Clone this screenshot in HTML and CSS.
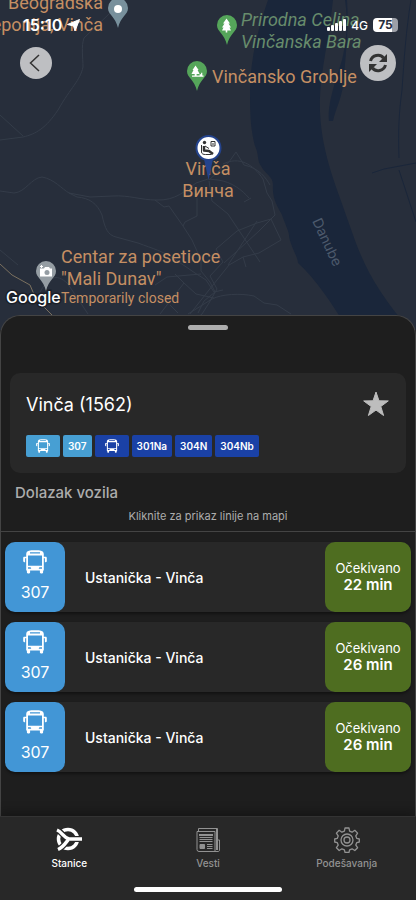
FILE: index.html
```
<!DOCTYPE html>
<html lang="sr-Latn">
<head>
    <meta charset="UTF-8">
    <meta name="viewport" content="width=device-width, initial-scale=1.0">
    <title>Vinča (1562) - Dolazak vozila</title>
    <link rel="stylesheet" href="styles.css">
</head>
<body>
    <!-- Shared icons -->
    <svg class="sprite" width="0" height="0" aria-hidden="true">
        <symbol id="bus" viewBox="0 0 24 24">
            <path fill="currentColor" fill-rule="evenodd" d="M6 .8C8 .2 16 .2 18 .8c1.8.5 2.6 1.4 2.8 3.2v2.800h1.700c.8 0 1.300.5 1.300 1.300v3c0 .8-.5 1.200-1.300 1.200h-.6V8.300h-1.100V20.500h-.7v1.700c0 .8-.4 1.200-1.100 1.200h-1c-.7 0-1.100-.4-1.100-1.200v-1.700H7.100v1.700c0 .8-.4 1.200-1.100 1.200H5c-.7 0-1.100-.4-1.100-1.200v-1.700h-.7V8.300H2.100v4h-.6c-.8 0-1.300-.4-1.300-1.200v-3c0-.8.5-1.300 1.300-1.300h1.700V4C3.400 2.200 4.200 1.300 6 .8zM7 2.200v1.300h10V2.200zM5 5.500v10.300h14V5.500zM5 17.300v1.500h3.300l-.7-1.500zM19 17.300h-2.600l-.7 1.500H19z"/>
        </symbol>
        <symbol id="pin" viewBox="0 0 20 30">
            <path d="M10 0A10 10 0 0 0 0 10c0 7 7.500 8.500 10 20 2.500-11.500 10-13 10-20A10 10 0 0 0 10 0z"/>
        </symbol>
    </svg>

    <div class="app">
        <header class="map">
            <svg class="map-canvas" viewBox="0 0 416 330" preserveAspectRatio="xMidYMid slice">
                <rect width="416" height="330" fill="#272e3b"/>

                <!-- Danube -->
                <path class="water" d="M268 0C258 28 250 60 250 92c0 26 1 38 5 54 4 8 2 15 6 20 4 8 12 10 12 19-1 14 4 20 9 30 3 9 6 14 7 20 0 8 9 22 9 28 18 16 35 42 50 67h62C380 295 365 270 352 232c-14-42-30-75-32-120-1-35 7-60 13-112z"/>
                <path class="water" d="M345 0c3 20 2 38-3 60-6 20-15 44-13 61h4c3-14 10-24 11-44 2-26 5-50 3-77z"/>
                <path class="canal" d="M411 0c-5 30-7 60-9 90-3 22-4 40-3 68M372 173l12-4 32-6M399 170l17 52"/>

                <!-- Roads -->
                <g class="road">
                    <path d="M110 13L84 38c-3 8-1 20-1 29-3 14-12 20-25 43-12 18-22 24-35 27L0 140M0 115l23 21"/>
                    <path d="M0 191l14 2c12-1 17-15 28-16 12 2 20 12 27 16l21 4 23-1c16-1 28 4 43 4 20 1 30-10 40-17l12-4 10 1c14 2 24 10 31 18"/>
                    <path d="M69 193l8 4c12 1 20 6 25 18 3 14 6 20 14 22l22 6c16 6 24 8 35 15l22 15 11 7 8 12 9-2"/>
                    <path d="M155 200l9 7 5-1 14 20 9 14 9 20v11l9 11 5 10-11 9-6 12M183 226l2-4 12-6V198"/>
                    <path d="M209 181l3 20 16 13 12 18 20 30M209 180l20-18 7-10 8 13c15 3 22 13 26 20M223 164c16-8 30 0 40 15l4 14 5 8 3 14-4 4-14 4-20 8-21 18 7 13-13 14 7 13-8 14-7 11-16 13"/>
                    <path d="M271 219l-12 12-35 32M257 221l-29 44M271 219l10 21-22 13-16 4-14 8-20 25-19 24M244 202l7-4M243 257l3 10"/>
                    <path d="M155 285l12-8 34-3M160 314l24-31-9-9M188 314l24-15c10-5 28-6 42-3l10 7 13 2 14 9M184 283l12 11 18 4M170 305l8 8"/>
                    <path d="M40 292c8-14 16-20 28-8l20 30M0 250l18 15"/>
                </g>
                <path class="highway" d="M0 264l12 11 18 10 6 14 16 16"/>

                <use href="#pin" class="pin-gray-blue" x="108" y="-2" width="20" height="30"/>
                <circle cx="118" cy="9" r="4" fill="#fff"/>

                <use href="#pin" class="pin-green" x="217" y="15" width="20" height="30"/>
                <path fill="#fff" d="M226.500 18.500l-3.500 5h1.500l-2.500 4h1.500l-1.500 3h3.700v2h1.600v-2h3.700l-1.500-3h1.500l-2.500-4h1.500z"/>

                <use href="#pin" class="pin-green" x="187" y="61" width="20" height="30"/>
                <path fill="#fff" d="M195.500 65.500l-3 4.500h1l-2 4h3.200v1.500h-2.700v1.300h11.500v-1.300h-1.200v-2.800h-1.200v1.500h-1.500v1.300h-3v-1.500h3l-2-4h1z"/>

                <use href="#pin" class="pin-gray" x="36" y="261" width="20" height="30"/>
                <path fill="#fff" d="M40 268.500h4l1-1.500h4l1 1.500h2v8H40z"/>
                <circle cx="47" cy="272.500" r="2.500" fill="#959da3"/>
                <path d="M40 266.500h3M41.500 265v3" stroke="#fff"/>

                <g class="place">
                    <text x="103" y="9" text-anchor="end">Beogradska</text>
                    <text x="103" y="31" text-anchor="end">deponija, Vinča</text>
                    <text x="212" y="83">Vinčansko Groblje</text>
                    <text x="208" y="175" text-anchor="middle">Vinča</text>
                    <text x="208" y="197" text-anchor="middle">Винча</text>
                    <text x="61" y="263">Centar za posetioce</text>
                    <text x="61" y="285">"Mali Dunav"</text>
                    <text class="place-note" x="61" y="303">Temporarily closed</text>
                </g>
                <g class="park">
                    <text x="241" y="26">Prirodna Celina</text>
                    <text x="241" y="48">Vinčanska Bara</text>
                </g>
                <text class="river" transform="translate(312 221) rotate(65)">Danube</text>

                <!-- Selected station -->
                <path fill="#24438c" d="M204 159h9l-4.500 21z"/>
                <circle cx="208.500" cy="148" r="12" fill="#fff" stroke="#24438c" stroke-width="2"/>
                <circle cx="204.500" cy="142.500" r="1.700" fill="#333"/>
                <path d="M204 146v4.500l5 .5 4 3" fill="none" stroke="#333" stroke-width="2.500" stroke-linejoin="round"/>
                <path d="M201.500 145v7c0 2 2 2.500 4 2.500h6M205 146l4 2.500" fill="none" stroke="#333" stroke-width="1"/>
                <path d="M211 141.500h4v4.500h-4zM212 144h2" fill="none" stroke="#333"/>

                <text class="google" x="6" y="303">Google</text>
            </svg>

            <div class="overlay">
                <div class="status-bar">
                    <div class="status-left">
                        <span>15:10</span>
                        <svg width="13" height="13" viewBox="0 0 13 13"><path fill="#fff" stroke="#fff" stroke-linejoin="round" d="M12.500.5L8 12 6.500 7 .5 5.500z"/></svg>
                    </div>
                    <div class="status-right">
                        <svg width="19" height="12" viewBox="0 0 19 12" fill="#fff">
                            <rect x="0" y="8" width="3" height="4" rx="1"/>
                            <rect x="4" y="6" width="3" height="6" rx="1"/>
                            <rect x="8" y="4" width="3" height="8" rx="1"/>
                            <rect x="12" y="2" width="3" height="10" rx="1"/>
                            <rect x="16" y="0" width="3" height="12" rx="1"/>
                        </svg>
                        <span class="network">4G</span>
                        <span class="battery">75</span>
                    </div>
                </div>
                <div class="map-actions">
                    <button class="round-btn" type="button" aria-label="Nazad">
                        <svg width="32" height="32" viewBox="0 0 32 32"><path d="M19 8l-8.500 8 8.500 8" fill="none" stroke="#333" stroke-width="1.500"/></svg>
                    </button>
                    <button class="round-btn refresh" type="button" aria-label="Osveži">
                        <svg width="20" height="20" viewBox="0 0 20 20">
                            <path d="M2.500 8C4 2 12 .500 15.500 5M17.500 12C16 18 8 19.500 4.500 15" fill="none" stroke="#333" stroke-width="3"/>
                            <path fill="#333" d="M19 1v8h-8zM1 19v-8h8z"/>
                        </svg>
                    </button>
                </div>
            </div>
        </header>

        <main class="sheet">
            <div class="handle"></div>

            <section class="station">
                <div class="station-head">
                    <h1>Vinča (1562)</h1>
                    <button class="star" type="button" aria-label="Omiljena stanica">
                        <svg width="28" height="28" viewBox="0 0 28 28"><path fill="#bdbdbd" stroke="#bdbdbd" stroke-linejoin="round" d="M14 2l3 8.800 9.300.1-7.500 5.600 2.800 9L14 20.100l-7.600 5.400 2.800-9-7.500-5.600 9.300-.1z"/></svg>
                    </button>
                </div>
                <div class="lines">
                    <span class="line line-day line-icon"><svg width="14" height="14"><use href="#bus"/></svg></span>
                    <span class="line line-day">307</span>
                    <span class="line line-icon"><svg width="14" height="14"><use href="#bus"/></svg></span>
                    <span class="line">301Na</span>
                    <span class="line">304N</span>
                    <span class="line">304Nb</span>
                </div>
            </section>

            <div class="arrivals-head">
                <h2>Dolazak vozila</h2>
                <p>Kliknite za prikaz linije na mapi</p>
            </div>

            <ul class="arrivals">
                <li>
                    <button class="arrival" type="button">
                        <span class="vehicle"><svg width="24" height="24"><use href="#bus"/></svg>307</span>
                        <span class="route">Ustanička - Vinča</span>
                        <span class="eta">Očekivano<strong>22 min</strong></span>
                    </button>
                </li>
                <li>
                    <button class="arrival" type="button">
                        <span class="vehicle"><svg width="24" height="24"><use href="#bus"/></svg>307</span>
                        <span class="route">Ustanička - Vinča</span>
                        <span class="eta">Očekivano<strong>26 min</strong></span>
                    </button>
                </li>
                <li>
                    <button class="arrival" type="button">
                        <span class="vehicle"><svg width="24" height="24"><use href="#bus"/></svg>307</span>
                        <span class="route">Ustanička - Vinča</span>
                        <span class="eta">Očekivano<strong>26 min</strong></span>
                    </button>
                </li>
            </ul>
        </main>

        <nav class="tabs">
            <div class="tab-list">
                <a class="tab active" href="#stanice">
                    <svg width="26" height="26" viewBox="0 0 26 26" fill="none" stroke="currentColor">
                        <circle cx="12" cy="12" r="9.500" stroke-width="3.500"/>
                        <path d="M1 3c5 2 6.500 7.500 12 9h13M2 22.500c5-2 7-5.500 10-9.500" stroke="#282828" stroke-width="6"/>
                        <path d="M1 3c5 2 6.500 7.500 12 9h13M2 22.500c5-2 7-5.500 10-9.500" stroke-width="3.500"/>
                    </svg>
                    Stanice
                </a>
                <a class="tab" href="#vesti">
                    <svg width="26" height="26" viewBox="0 0 26 26" fill="none" stroke="currentColor">
                        <path d="M2 4.500h18v20H4a2 2 0 0 1-2-2zM3.500 4V1.500H22.500V23M20 24.500h3c1 0 1.500-.5 1.500-1.500V13h-2"/>
                        <path d="M22 2v21M4 8h14" stroke-width="2"/>
                        <path d="M4.500 10.500h13M4.500 12.500h13M4.500 14.500h13M12 17.500h5.500M12 19.500h5.500M12 21.500h5.500"/>
                        <path fill="currentColor" d="M5 17.500h4.500v4H5z"/>
                    </svg>
                    Vesti
                </a>
                <a class="tab" href="#podesavanja">
                    <svg width="26" height="26" viewBox="0 0 26 26" fill="none" stroke="currentColor" stroke-width="1.300" stroke-linejoin="round">
                        <path d="M11 1h4l.6 3.200 2.500 1L20.800 3.300l2.800 2.800-1.800 2.800 1 2.500L25.300 12v3l-2.500.6-1 2.500 1.800 2.600-2.800 2.800-2.700-1.700-2.500 1L15 25.300h-4l-.6-2.500-2.500-1-2.700 1.700-2.800-2.800 1.800-2.600-1-2.500L.7 15v-3l2.500-.6 1-2.500-1.800-2.800 2.800-2.800L7.900 5.200l2.500-1z"/>
                        <circle cx="13" cy="13" r="6"/>
                        <circle cx="13" cy="13" r="3"/>
                    </svg>
                    Podešavanja
                </a>
            </div>
            <div class="home-indicator"></div>
        </nav>
    </div>
</body>
</html>
```
FILE: styles.css
```
* {
    box-sizing: border-box;
}
body {
    margin: 0;
    background: #1e1e1e;
    color: #fff;
    font-family: Inter, "Liberation Sans", sans-serif;
}
h1, h2, p, ul {
    margin: 0;
    padding: 0;
}
button {
    border: none;
    padding: 0;
    background: none;
    color: inherit;
    font-family: inherit;
    cursor: pointer;
}
svg {
    display: block;
}
.sprite {
    position: absolute;
}
.app {
    display: flex;
    flex-direction: column;
    min-height: 100vh;
}

/* Map */
.map {
    display: grid;
    height: 330px;
}
.map-canvas,
.overlay {
    grid-area: 1 / 1;
    width: 100%;
}
.map-canvas {
    height: 330px;
}
.overlay {
    z-index: 1;
}
.water {
    fill: #1a263a;
}
.canal {
    fill: none;
    stroke: #1a263a;
}
.road {
    fill: none;
    stroke: #343c49;
}
.highway {
    fill: none;
    stroke: #7a705f;
}
.pin-green {
    fill: #55a55a;
}
.pin-gray {
    fill: #959da3;
}
.pin-gray-blue {
    fill: #78909c;
}
.place {
    fill: #c58f63;
    font-family: Roboto, sans-serif;
    font-size: 18px;
}
.place-note {
    font-size: 14px;
}
.park {
    fill: #678c6c;
    font-family: Roboto, sans-serif;
    font-size: 18px;
    font-style: italic;
}
.river {
    fill: #4d5a6c;
    font-size: 14px;
}
.google {
    fill: #fff;
    stroke: #1b1f28;
    stroke-width: 3px;
    paint-order: stroke;
    font-size: 16px;
    font-weight: 500;
}

/* Status bar and map buttons */
.status-bar {
    display: flex;
    justify-content: space-between;
    align-items: center;
    height: 20px;
    margin-top: 15px;
    padding: 0 18px 0 23px;
}
.status-left,
.status-right {
    display: flex;
    align-items: center;
    gap: 5px;
    font-size: 16px;
    font-weight: 600;
}
.network {
    font-size: 12px;
    font-weight: 500;
}
.battery {
    width: 25px;
    border-radius: 4px;
    background: linear-gradient(to right, #fff 75%, #9da0a8 75%);
    color: #272e3b;
    font-size: 12px;
    font-weight: 700;
    line-height: 14px;
    text-align: center;
}
.map-actions {
    display: flex;
    justify-content: space-between;
    align-items: center;
    margin-top: 10px;
    padding: 0 20px;
}
.round-btn {
    display: flex;
    justify-content: center;
    align-items: center;
    width: 32px;
    height: 32px;
    border-radius: 50%;
    background: #bebfc2;
}
.refresh {
    width: 36px;
    height: 36px;
}

/* Bottom sheet */
.sheet {
    z-index: 2;
    flex: 1;
    margin-top: -15px;
    border: 1px solid #444;
    border-bottom: none;
    border-radius: 20px 20px 0 0;
    background: #1e1e1e;
}
.handle {
    width: 40px;
    height: 5px;
    margin: 9px auto 0;
    border-radius: 3px;
    background: #adadad;
}
.station {
    margin: 43px 9px 0;
    padding: 16px;
    border-radius: 10px;
    background: #282828;
}
.station-head {
    display: flex;
    justify-content: space-between;
    align-items: center;
    height: 30px;
}
h1 {
    font-size: 18px;
    font-weight: 400;
}
.lines {
    display: flex;
    flex-wrap: wrap;
    gap: 3px;
    margin-top: 16px;
}
.line {
    display: flex;
    align-items: center;
    height: 22px;
    padding: 0 5px;
    border-radius: 2px;
    background: #1a41a6;
    font-size: 10px;
    font-weight: 600;
}
.line-day {
    background: #479fd3;
}
.line-icon {
    padding: 0 10px;
}
.arrivals-head {
    padding: 10px 14px 7px;
    border-bottom: 1px solid #444;
    color: #adadad;
}
h2 {
    font-size: 15px;
    font-weight: 500;
    line-height: 20px;
}
.arrivals-head p {
    margin-top: 5px;
    font-size: 11px;
    line-height: 16px;
    text-align: center;
}
.arrivals {
    display: flex;
    flex-direction: column;
    gap: 10px;
    padding: 10px 4px 20px;
    list-style: none;
}
.arrival {
    display: flex;
    width: 100%;
    height: 70px;
    border-radius: 10px;
    background: #282828;
    box-shadow: 0 2px 3px rgba(0, 0, 0, 0.4);
}
.vehicle,
.eta {
    display: flex;
    flex-direction: column;
    align-items: center;
    justify-content: center;
    height: 100%;
    padding-bottom: 2px;
    border-radius: 10px;
}
.vehicle {
    width: 60px;
    gap: 8px;
    background: #4296d6;
    font-size: 16px;
}
.route {
    flex: 1;
    align-self: center;
    padding-left: 20px;
    font-size: 14px;
    font-weight: 500;
    text-align: left;
}
.eta {
    width: 86px;
    background: #4e6d20;
    font-size: 13px;
}
.eta strong {
    font-size: 15px;
    font-weight: 600;
    line-height: 17px;
}

/* Tab bar */
.tabs {
    z-index: 3;
    height: 84px;
    padding-top: 10px;
    border-top: 1px solid #333;
    background: #282828;
    box-shadow: 0 -4px 10px rgba(0, 0, 0, 0.3);
}
.tab-list {
    display: grid;
    grid-template-columns: repeat(3, 1fr);
}
.tab {
    display: flex;
    flex-direction: column;
    align-items: center;
    gap: 4px;
    color: #929292;
    font-size: 10px;
    font-weight: 500;
    line-height: 12px;
    text-decoration: none;
}
.tab.active {
    color: #fff;
}
.home-indicator {
    width: 148px;
    height: 5px;
    margin: 18px auto 0;
    border-radius: 3px;
    background: #fff;
}
```
